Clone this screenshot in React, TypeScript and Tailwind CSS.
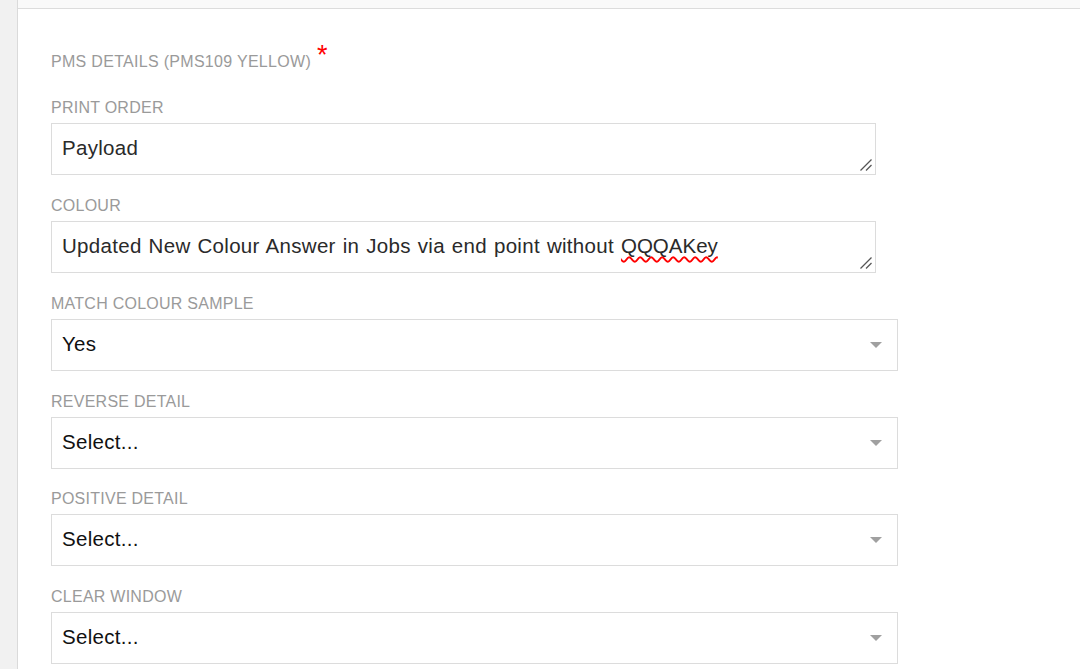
import React from 'react'

const font = { fontFamily: '"Liberation Sans", Arial, sans-serif' }

function Label({ text }: { text: string }) {
  return <div className="mb-[5px] text-[16px] leading-[20px] tracking-[0.25px] text-[#9a9a9a]">{text}</div>
}

function ResizeHandle() {
  return (
    <svg className="absolute right-[2px] bottom-[2px]" width="14" height="14" viewBox="0 0 14 14">
      <line x1="1.5" y1="12.5" x2="12.5" y2="1.5" stroke="#555" strokeWidth="1.3" />
      <line x1="7" y1="12.5" x2="12.5" y2="7" stroke="#555" strokeWidth="1.3" />
    </svg>
  )
}

function TextArea({ children }: { children: React.ReactNode }) {
  return (
    <div className="relative h-[52px] w-[825px] border border-[#dcdcdc] bg-white px-[10px] pt-[10px] text-[20.5px] leading-[28px] tracking-[0.3px] text-[#2a2a2a] [word-spacing:1px]">
      {children}
      <ResizeHandle />
    </div>
  )
}

function Select({ value }: { value: string }) {
  return (
    <div className="flex h-[52px] w-[847px] items-center justify-between border border-[#dcdcdc] bg-white pr-[15px] pb-[2px] pl-[10px]">
      <span className="text-[20.5px] tracking-[0.3px] text-[#111]">{value}</span>
      <svg className="mt-[2px]" width="12" height="6" viewBox="0 0 12 6">
        <polygon points="0,0 12,0 6,6" fill="#a0a0a0" />
      </svg>
    </div>
  )
}

export default function App() {
  return (
    <div className="flex h-[669px] w-[1080px] overflow-hidden bg-white" style={font}>
      <div className="w-[18px] shrink-0 border-r border-[#dadada] bg-[#f1f1f1]" />
      <div className="flex flex-1 flex-col">
        <div className="h-[9px] shrink-0 border-b border-[#dcdcdc] bg-[#f9f9f9]" />
        <div className="flex flex-col pt-[43px] pl-[33px]">
          <div className="mb-[26px] flex h-[20px] items-start text-[16px] leading-[20px] tracking-[0.3px] text-[#9a9a9a]">
            <span>PMS DETAILS (PMS109 YELLOW)</span>
            <span className="relative -top-[10px] ml-[6px] text-[27px] leading-[27px] text-[#ff0000]">*</span>
          </div>

          <div className="mb-[21px]">
            <Label text="PRINT ORDER" />
            <TextArea>Payload</TextArea>
          </div>

          <div className="mb-[21px]">
            <Label text="COLOUR" />
            <TextArea>
              Updated New Colour Answer in Jobs via end point without{' '}
              <span className="pr-[2px] tracking-normal underline decoration-[#ff0000] decoration-wavy decoration-[1.5px] underline-offset-[3px] [text-decoration-skip-ink:none]">
                QQQAKey
              </span>
            </TextArea>
          </div>

          <div className="mb-[21px]">
            <Label text="MATCH COLOUR SAMPLE" />
            <Select value="Yes" />
          </div>

          <div className="mb-[20px]">
            <Label text="REVERSE DETAIL" />
            <Select value="Select..." />
          </div>

          <div className="mb-[21px]">
            <Label text="POSITIVE DETAIL" />
            <Select value="Select..." />
          </div>

          <div>
            <Label text="CLEAR WINDOW" />
            <Select value="Select..." />
          </div>
        </div>
      </div>
    </div>
  )
}
